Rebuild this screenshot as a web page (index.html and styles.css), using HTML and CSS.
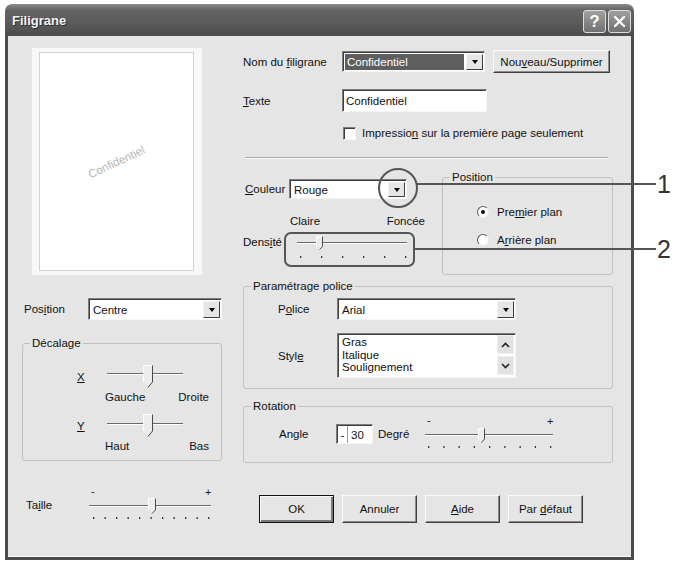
FILE: index.html
```html
<!DOCTYPE html>
<html lang="fr">
<head>
<meta charset="utf-8">
<title>Filigrane</title>
<link rel="stylesheet" href="styles.css">
</head>
<body>
<div class="window">
  <div class="titlebar">
    <span class="title">Filigrane</span>
    <div class="tb-buttons">
      <span class="tb-btn">?</span>
      <span class="tb-btn"><svg width="13" height="13" viewBox="0 0 13 13"><path d="M2 2L11 11M11 2L2 11" stroke="#fff" stroke-width="2.4" stroke-linecap="round"/></svg></span>
    </div>
  </div>
  <div class="content">
    <div class="col-left">
      <div class="preview"><div class="paper"><span class="wm">Confidentiel</span></div></div>

      <div class="pos-row">
        <span class="lbl-pos">Pos<u>i</u>tion</span>
        <div class="select sunken w-pos"><span class="sel-text">Centre</span><span class="drop"><i class="tri"></i></span></div>
      </div>

      <fieldset class="group decal">
        <legend>Décalage</legend>
        <div class="srow first">
          <span class="axis"><u>X</u></span>
          <svg width="76" height="24" viewBox="0 0 76 24">
            <path d="M0 8.5H76" stroke="#6a6a6a"/><path d="M0 9.5H76" stroke="#fff"/>
            <g transform="translate(36,0)">
              <path d="M0.5 0.5H9.5V17L5 22.5L0.5 17Z" fill="#ececec"/>
              <path d="M0.5 17V0.5H9.5" fill="none" stroke="#fff"/>
              <path d="M9.5 0.5V17L5 22.5" fill="none" stroke="#4a4a4a"/>
            </g>
          </svg>
        </div>
        <div class="lrow"><span>Gauche</span><span>Droite</span></div>
        <div class="srow second">
          <span class="axis"><u>Y</u></span>
          <svg width="76" height="24" viewBox="0 0 76 24">
            <path d="M0 9.5H76" stroke="#6a6a6a"/><path d="M0 10.5H76" stroke="#fff"/>
            <g transform="translate(36,0)">
              <path d="M0.5 0.5H9.5V17L5 22.5L0.5 17Z" fill="#ececec"/>
              <path d="M0.5 17V0.5H9.5" fill="none" stroke="#fff"/>
              <path d="M9.5 0.5V17L5 22.5" fill="none" stroke="#4a4a4a"/>
            </g>
          </svg>
        </div>
        <div class="lrow"><span>Haut</span><span>Bas</span></div>
      </fieldset>

      <div class="taille">
        <span class="lbl-taille">Ta<u>i</u>lle</span>
        <svg class="sl-taille" width="124" height="40" viewBox="0 -4 124 40">
          <text x="2" y="9" class="pm">-</text><text x="116" y="10" class="pm">+</text>
          <path d="M0 19.5H122" stroke="#6a6a6a"/><path d="M0 20.5H122" stroke="#fff"/>
          <g transform="translate(59,12)">
            <path d="M0.5 0.5H7.5V12L4 15.5L0.5 12Z" fill="#ececec"/>
            <path d="M0.5 12V0.5H7.5" fill="none" stroke="#fff"/>
            <path d="M7.5 0.5V12L4 15.5" fill="none" stroke="#4a4a4a"/>
          </g>
          <g fill="#333">
            <rect x="4" y="31" width="1.3" height="2"/><rect x="15.5" y="31" width="1.3" height="2"/><rect x="27" y="31" width="1.3" height="2"/><rect x="38.5" y="31" width="1.3" height="2"/><rect x="50" y="31" width="1.3" height="2"/><rect x="61.5" y="31" width="1.3" height="2"/><rect x="73" y="31" width="1.3" height="2"/><rect x="84.5" y="31" width="1.3" height="2"/><rect x="96" y="31" width="1.3" height="2"/><rect x="107.5" y="31" width="1.3" height="2"/><rect x="119" y="31" width="1.3" height="2"/>
          </g>
        </svg>
      </div>
    </div>

    <div class="col-right">
      <div class="row r1">
        <span class="lbl-r">Nom du <u>f</u>iligrane</span>
        <div class="select sunken w-name"><span class="sel-text hl">Confidentiel</span><span class="drop"><i class="tri"></i></span></div>
        <button class="btn btn-new"><span>Nou<u>v</u>eau/Supprimer</span></button>
      </div>
      <div class="row r2">
        <span class="lbl-r"><u>T</u>exte</span>
        <div class="input sunken w-text">Confidentiel</div>
      </div>
      <div class="row r3">
        <span class="checkbox sunken"></span>
        <span>Impressio<u>n</u> sur la première page seulement</span>
      </div>
      <div class="sep"></div>

      <div class="mid">
        <div class="mid-left">
          <div class="row couleur">
            <span class="lbl-c"><u>C</u>ouleur</span>
            <div class="select sunken w-color"><span class="sel-text">Rouge</span><span class="drop"><i class="tri"></i></span></div>
          </div>
          <div class="cf-row"><span>Claire</span><span>Foncée</span></div>
          <div class="dens-row">
            <span class="lbl-d">Dens<u>i</u>té</span>
            <svg width="112" height="28" viewBox="0 0 112 28">
              <path d="M0 8.5H110" stroke="#6a6a6a"/><path d="M0 9.5H110" stroke="#fff"/>
              <g transform="translate(19,2)">
                <path d="M0.5 0.5H6.5V10.5L3.5 13.5L0.5 10.5Z" fill="#ececec"/>
                <path d="M0.5 10.5V0.5H6.5" fill="none" stroke="#fff"/>
                <path d="M6.5 0.5V10.5L3.5 13.5" fill="none" stroke="#4a4a4a"/>
              </g>
              <g fill="#333">
                <rect x="3" y="22" width="1.3" height="2"/><rect x="24" y="22" width="1.3" height="2"/><rect x="45" y="22" width="1.3" height="2"/><rect x="66" y="22" width="1.3" height="2"/><rect x="87" y="22" width="1.3" height="2"/><rect x="108" y="22" width="1.3" height="2"/>
              </g>
            </svg>
          </div>
        </div>
        <fieldset class="group posbox">
          <legend>Position</legend>
          <div class="radio-row first"><span class="radio on"></span><span>Pre<u>m</u>ier plan</span></div>
          <div class="radio-row"><span class="radio"></span><span>A<u>r</u>rière plan</span></div>
        </fieldset>
      </div>

      <fieldset class="group police">
        <legend>Paramétrage police</legend>
        <div class="row prow">
          <span class="lbl-p">P<u>o</u>lice</span>
          <div class="select sunken w-font"><span class="sel-text">Arial</span><span class="drop"><i class="tri"></i></span></div>
        </div>
        <div class="row srow2">
          <span class="lbl-p">Styl<u>e</u></span>
          <div class="listbox sunken">
            <div class="items"><div>Gras</div><div>Italique</div><div>Soulignement</div></div>
            <div class="scroll">
              <span class="sbtn"><svg width="9" height="6" viewBox="0 0 9 6"><path d="M1 5L4.5 1.5L8 5" fill="none" stroke="#222" stroke-width="1.6"/></svg></span>
              <span class="sbtn"><svg width="9" height="6" viewBox="0 0 9 6"><path d="M1 1L4.5 4.5L8 1" fill="none" stroke="#222" stroke-width="1.6"/></svg></span>
            </div>
          </div>
        </div>
      </fieldset>

      <fieldset class="group rotation">
        <legend>Rotation</legend>
        <div class="row arow">
          <span class="lbl-a">Angle</span>
          <div class="spin sunken"><span class="sign">-</span><span class="num">30</span></div>
          <span class="lbl-deg">Degré</span>
          <svg class="sl-rot" width="130" height="40" viewBox="0 -4 130 40">
            <text x="2" y="8" class="pm">-</text><text x="122" y="9" class="pm">+</text>
            <path d="M0 18.5H128" stroke="#6a6a6a"/><path d="M0 19.5H128" stroke="#fff"/>
            <g transform="translate(53,12)">
              <path d="M0.5 0.5H6.5V11L3.5 14.5L0.5 11Z" fill="#ececec"/>
              <path d="M0.5 11V0.5H6.5" fill="none" stroke="#fff"/>
              <path d="M6.5 0.5V11L3.5 14.5" fill="none" stroke="#4a4a4a"/>
            </g>
            <g fill="#333">
              <rect x="3" y="30" width="1.3" height="2"/><rect x="18.25" y="30" width="1.3" height="2"/><rect x="33.5" y="30" width="1.3" height="2"/><rect x="48.75" y="30" width="1.3" height="2"/><rect x="64" y="30" width="1.3" height="2"/><rect x="79.25" y="30" width="1.3" height="2"/><rect x="94.5" y="30" width="1.3" height="2"/><rect x="109.75" y="30" width="1.3" height="2"/><rect x="125" y="30" width="1.3" height="2"/>
            </g>
          </svg>
        </div>
      </fieldset>

      <div class="buttons">
        <button class="btn btn-dlg default"><span>OK</span></button>
        <button class="btn btn-dlg"><span>Annuler</span></button>
        <button class="btn btn-dlg"><span><u>A</u>ide</span></button>
        <button class="btn btn-dlg"><span>Par <u>d</u>éfaut</span></button>
      </div>
    </div>
  </div>
</div>

<svg class="callouts" width="679" height="565" viewBox="0 0 679 565">
  <circle cx="398" cy="188" r="19" fill="none" stroke="#555" stroke-width="2"/>
  <path d="M417 184H656" stroke="#555" stroke-width="2"/>
  <rect x="285" y="233" width="129" height="33" rx="6" fill="none" stroke="#555" stroke-width="2"/>
  <path d="M414 249H656" stroke="#555" stroke-width="2"/>
  <text x="657" y="193" class="num-lbl">1</text>
  <text x="657" y="258" class="num-lbl">2</text>
</svg>
</body>
</html>
```

FILE: styles.css
```css
* { box-sizing: border-box; }
html, body { margin: 0; padding: 0; background: #fff; }
body {
  font-family: "Liberation Sans", Arial, sans-serif;
  font-size: 11.5px;
  color: #111;
  width: 679px;
  height: 565px;
  overflow: hidden;
  position: relative;
}
u { text-decoration: underline; text-underline-offset: 1px; }

.window { margin: 4px 0 0 5px; width: 629px; }

.titlebar {
  height: 32px;
  background: linear-gradient(#8c8c8c, #656565 18%, #5a5a5a 60%, #4c4c4c);
  border-radius: 7px 7px 0 0;
  display: flex;
  align-items: center;
  justify-content: space-between;
  padding: 0 3px 0 7px;
}
.title { color: #f2f2f2; font-weight: bold; font-size: 13px; text-shadow: 1px 1px 0 #2e2e2e; }
.tb-buttons { display: flex; gap: 2px; margin-top: 3px; }
.tb-btn {
  width: 23px; height: 23px;
  border: 1px solid #dcdcdc;
  border-radius: 3px;
  background: linear-gradient(#a0a0a0, #707070);
  color: #fff;
  font-weight: bold;
  font-size: 17px;
  display: flex; align-items: center; justify-content: center;
}

.content {
  height: 524px;
  background: #e5e5e5;
  border: 3px solid #4c4c4c;
  border-top: 0;
  box-shadow: inset 0 -1px 0 #fafafa;
  display: flex;
}
.col-left { width: 232px; flex: none; }
.col-right { flex: 1; padding-left: 3px; }

/* common controls */
.sunken {
  background: #fff;
  border: 1px solid;
  border-color: #7c7c7c #f6f6f6 #f6f6f6 #7c7c7c;
  box-shadow: inset 1px 1px 0 #3e3e3e;
}
.select { display: flex; align-items: stretch; padding: 2px 1px 1px 2px; }
.sel-text { flex: 1; display: flex; align-items: center; padding-left: 2px; white-space: nowrap; }
.sel-text.hl { background: #5e5e5e; color: #fff; margin: 0 2px 0 0; }
.drop {
  width: 17px; flex: none;
  background: #e5e5e5;
  border: 1px solid;
  border-color: #f4f4f4 #3e3e3e #3e3e3e #f4f4f4;
  display: flex; align-items: center; justify-content: center;
}
.tri { width: 0; height: 0; border-left: 3.5px solid transparent; border-right: 3.5px solid transparent; border-top: 4px solid #000; }

.btn {
  font: inherit; color: #111;
  background: #e5e5e5;
  border: 1px solid;
  border-color: #fbfbfb #3e3e3e #3e3e3e #fbfbfb;
  box-shadow: inset -1px -1px 0 #8c8c8c;
  padding: 0;
  display: flex; align-items: center; justify-content: center;
  white-space: nowrap;
}
.btn.default { border: 1px solid #111; box-shadow: inset 1px 1px 0 #fbfbfb, inset -2px -2px 0 #7a7a7a; }

.group {
  margin: 0;
  padding: 0;
  border: 1px solid #c0c0c0;
  border-radius: 3px;
  min-inline-size: 0;
}
.group legend { padding: 0 2px; margin-left: 7px; line-height: 13px; }

/* left column */
.preview { margin: 12px 0 0 24px; width: 170px; height: 227px; background: #f8f8f8; padding: 4px 8px 4px 7px; }
.paper { width: 100%; height: 100%; background: #fff; border: 1px solid #d4d4d4; display: flex; align-items: center; justify-content: center; }
.wm { transform: rotate(-25deg); color: #b6b6b6; font-size: 11.5px; }

.pos-row { display: flex; align-items: center; margin: 23px 0 0 16px; height: 22px; }
.lbl-pos { width: 64px; }
.w-pos { width: 134px; height: 22px; }

.decal { margin: 17px 0 0 14px; width: 200px; padding-bottom: 7px; }
.srow { display: flex; align-items: center; height: 24px; padding-left: 54px; }
.srow.first { margin-top: 15px; }
.srow.second { margin-top: 10px; }
.axis { width: 30px; }
.lrow { display: flex; justify-content: space-between; width: 104px; margin: 2px 0 0 82px; line-height: 13px; }

.taille { display: flex; align-items: flex-start; margin: 25px 0 0 18px; }
.lbl-taille { width: 63px; margin-top: 13px; }
.sl-taille { margin-top: -4px; }
.pm { font-family: "Liberation Sans", Arial, sans-serif; font-size: 11px; fill: #222; }

/* right column */
.row { display: flex; align-items: center; }
.r1 { height: 23px; margin-top: 14px; }
.lbl-r { width: 99px; }
.w-name { width: 143px; height: 21px; }
.btn-new { width: 117px; height: 23px; margin-left: 8px; }
.r2 { height: 23px; margin-top: 16px; }
.input { display: flex; align-items: center; padding-left: 3px; }
.w-text { width: 145px; height: 23px; }
.r3 { height: 14px; margin-top: 14px; padding-left: 100px; gap: 6px; }
.checkbox { width: 13px; height: 13px; display: block; }
.sep { margin: 17px 0 0 2px; width: 363px; height: 2px; border-top: 1px solid #a9a9a9; border-bottom: 1px solid #fbfbfb; }

.mid { display: flex; align-items: flex-start; }
.mid-left { width: 199px; }
.couleur { margin-top: 20px; height: 20px; padding-left: 2px; }
.lbl-c { width: 44px; }
.w-color { width: 118px; height: 20px; }
.cf-row { display: flex; justify-content: space-between; width: 135px; margin: 16px 0 0 47px; line-height: 13px; }
.dens-row { display: flex; align-items: flex-start; margin-top: 6px; }
.lbl-d { width: 54px; margin-top: 2px; }

.posbox { width: 171px; margin-top: 12px; padding-bottom: 27px; }
.radio-row { display: flex; align-items: center; gap: 8px; height: 14px; padding-left: 34px; margin-top: 14px; }
.radio-row.first { margin-top: 21px; }
.radio {
  width: 12px; height: 12px; border-radius: 50%;
  background: #fff;
  border: 1px solid;
  border-color: #5e5e5e #f0f0f0 #f0f0f0 #5e5e5e;
  display: flex; align-items: center; justify-content: center;
}
.radio.on::after { content: ""; width: 4px; height: 4px; border-radius: 50%; background: #111; }

.police { width: 370px; margin-top: 5px; padding-bottom: 10px; }
.prow { margin-top: 5px; height: 22px; padding-left: 34px; }
.lbl-p { width: 59px; }
.w-font { width: 179px; height: 22px; }
.srow2 { margin-top: 13px; padding-left: 34px; }
.listbox { width: 179px; height: 45px; display: flex; padding: 1px 1px 1px 2px; }
.items { flex: 1; padding: 1px 0 0 2px; line-height: 12.5px; }
.scroll { width: 17px; display: flex; flex-direction: column; justify-content: space-between; padding: 0 0 1px; }
.sbtn { height: 19px; background: #e2e2e2; border: 1px solid #f0f0f0; display: flex; align-items: center; justify-content: center; }

.rotation { width: 370px; margin-top: 11px; padding-bottom: 10px; }
.arow { margin-top: 3px; height: 36px; padding-left: 35px; }
.lbl-a { width: 57px; }
.spin { width: 37px; height: 20px; display: flex; align-items: stretch; padding: 1px 0 0 1px; }
.sign { width: 10px; border-right: 1px solid #9a9a9a; display: flex; align-items: center; justify-content: center; }
.num { flex: 1; display: flex; align-items: center; padding-left: 3px; }
.lbl-deg { width: 47px; margin-left: 5px; }
.sl-rot { margin-top: -4px; }

.buttons { display: flex; gap: 8px; margin-top: 32px; padding-left: 16px; }
.btn-dlg { width: 75px; height: 28px; }

/* callout annotations over the dialog */
.callouts { position: absolute; left: 0; top: 0; pointer-events: none; }
.num-lbl { font-family: "Liberation Sans", Arial, sans-serif; font-size: 25px; fill: #333; }
```
